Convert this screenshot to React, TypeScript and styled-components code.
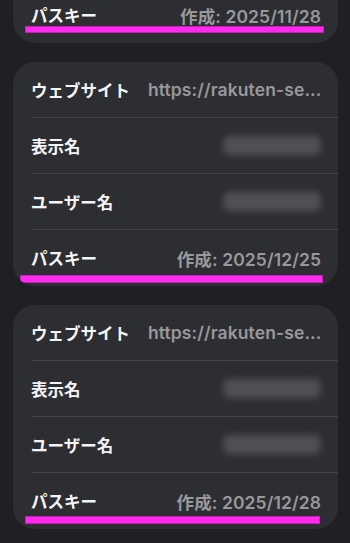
import React from 'react';
import styled, { createGlobalStyle } from 'styled-components';

const GlobalStyle = createGlobalStyle`
  html, body {
    margin: 0;
    padding: 0;
    background: #1f2023;
    overflow: hidden;
  }
  body {
    font-family: Inter, "Noto Sans CJK JP", sans-serif;
    -webkit-font-smoothing: antialiased;
  }
`;

const ROW_HEIGHT = 56;

type Mark = { left: number; right: number; top: number; thick: number };

type Entry = {
  site: string;
  created: string;
  mark: Mark;
  // only the last row is still on screen, the rest is scrolled away
  scrolledPast?: boolean;
};

const ENTRIES: Entry[] = [
  {
    site: 'https://rakuten-se...',
    created: '作成: 2025/11/28',
    mark: { left: 13, right: 15, top: 40, thick: 5 },
    scrolledPast: true,
  },
  {
    site: 'https://rakuten-se...',
    created: '作成: 2025/12/25',
    mark: { left: 8, right: 16, top: 46, thick: 6 },
  },
  {
    site: 'https://rakuten-se...',
    created: '作成: 2025/12/28',
    mark: { left: 13, right: 19, top: 44, thick: 6 },
  },
];

const Page = styled.div`
  width: 350px;
  height: 543px;
  overflow: hidden;
`;

const List = styled.div`
  display: flex;
  flex-direction: column;
  gap: 19px;
  padding: 0 12px 0 13px;
  margin-top: -13px;
`;

const Card = styled.section<{ $scrolled?: boolean }>`
  background: #2d2e31;
  border-radius: ${(p) => (p.$scrolled ? '0 0 22px 22px' : '22px')};
  overflow: hidden;
`;

const Row = styled.div<{ $last?: boolean }>`
  position: relative;
  height: ${ROW_HEIGHT}px;
  margin-left: 18px;
  padding-right: 17px;
  box-sizing: border-box;
  display: flex;
  align-items: center;
  justify-content: space-between;
  gap: 18px;
  border-bottom: ${(p) => (p.$last ? 'none' : '1px solid #434448')};
`;

const Label = styled.span`
  color: #f4f4f6;
  font-size: 16.5px;
  font-weight: 700;
  font-family: "Noto Sans CJK JP", sans-serif;
  white-space: nowrap;
`;

const Value = styled.span`
  color: #98989d;
  font-size: 17.5px;
  font-weight: 600;
  white-space: nowrap;
  letter-spacing: 0.1px;
`;

const Blurred = styled.span`
  display: block;
  width: 98px;
  height: 19px;
  border-radius: 7px;
  background: #505155;
  filter: blur(3.5px);
`;

const Highlight = styled.div<{ $mark: Mark }>`
  position: absolute;
  left: ${(p) => p.$mark.left - 18}px;
  right: ${(p) => p.$mark.right}px;
  top: ${(p) => p.$mark.top}px;
  height: ${(p) => p.$mark.thick}px;
  background: #ff2bec;
  box-shadow: 0 0 0 1px #c020b4;
`;

const PasskeyCard = ({ entry }: { entry: Entry }) => (
  <Card $scrolled={entry.scrolledPast}>
    {!entry.scrolledPast && (
      <>
        <Row>
          <Label>ウェブサイト</Label>
          <Value>{entry.site}</Value>
        </Row>
        <Row>
          <Label>表示名</Label>
          <Blurred />
        </Row>
        <Row>
          <Label>ユーザー名</Label>
          <Blurred />
        </Row>
      </>
    )}
    <Row $last>
      <Label>パスキー</Label>
      <Value>{entry.created}</Value>
      <Highlight $mark={entry.mark} />
    </Row>
  </Card>
);

const App = () => (
  <Page>
    <GlobalStyle />
    <List>
      {ENTRIES.map((e) => (
        <PasskeyCard key={e.created} entry={e} />
      ))}
    </List>
  </Page>
);

export default App;
